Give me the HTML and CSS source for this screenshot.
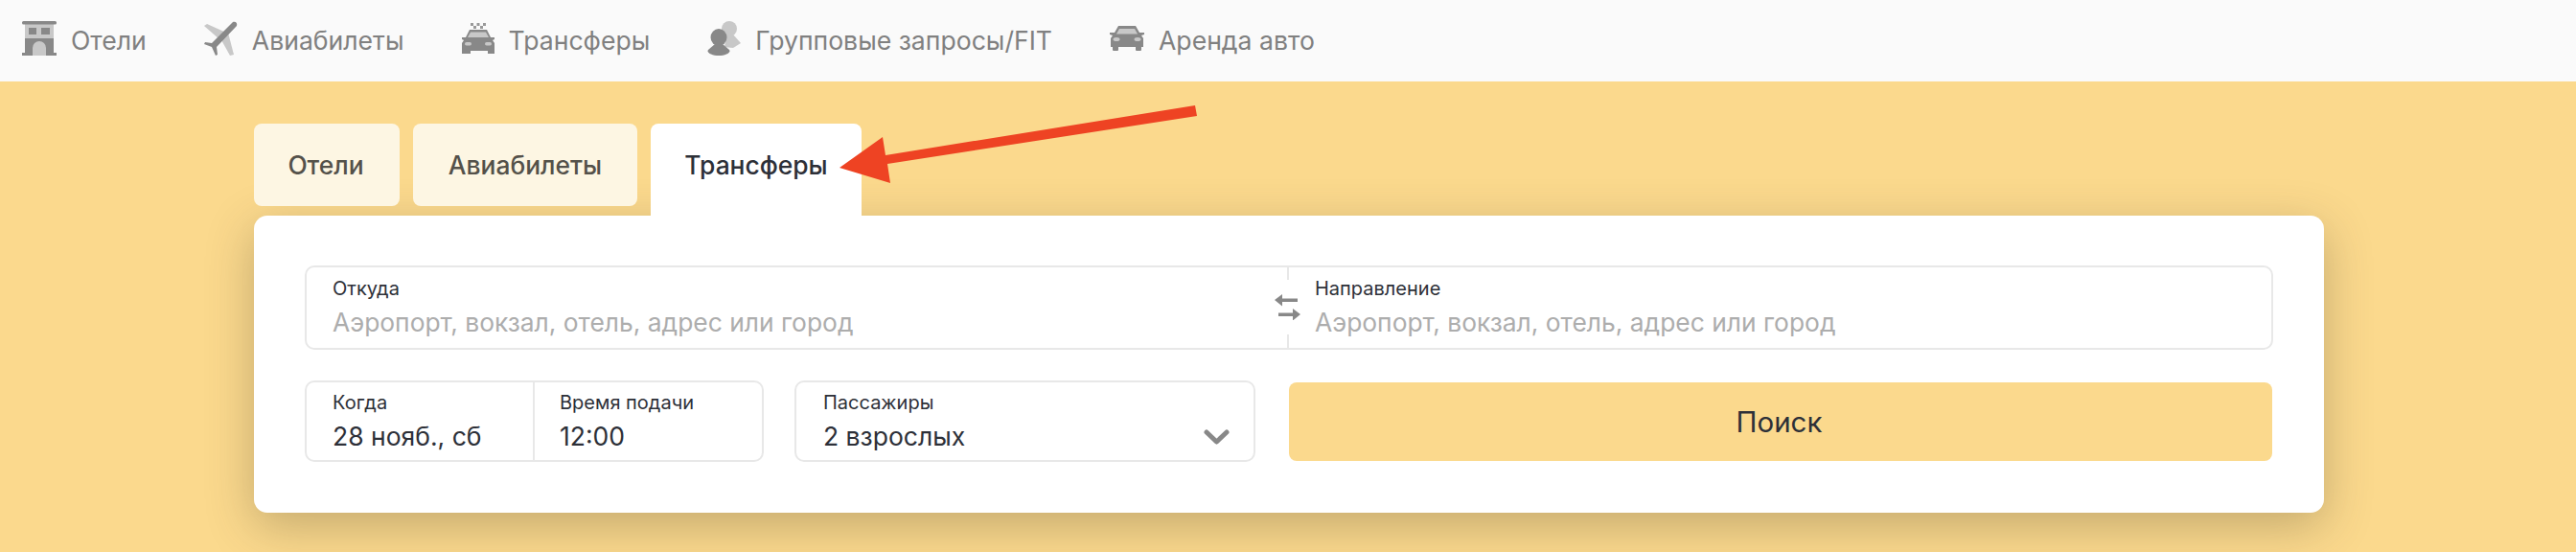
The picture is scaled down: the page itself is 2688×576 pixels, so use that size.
FILE: index.html

```html
<!DOCTYPE html>
<html lang="ru">
<head>
  <meta charset="UTF-8" />
  <title>Трансферы</title>
  <link rel="stylesheet" href="styles.css">
</head>
<body>
  <nav class="topbar">
    <a class="nav-item">
      <svg class="nav-icon" viewBox="0 0 36 36" width="36" height="36">
        <rect x="3" y="3" width="30" height="16" fill="#c8c8c8"/>
        <rect x="0" y="0" width="36" height="3.500" rx="1.500" fill="#888"/>
        <rect x="7" y="7" width="8" height="7" fill="#888"/>
        <rect x="20" y="7" width="9" height="7" fill="#888"/>
        <path d="M3 18h30v15h3v3H0v-3h3z" fill="#888"/>
        <path d="M11 36V28a7 7 0 0 1 14 0v8z" fill="#c8c8c8"/>
      </svg>
      <span>Отели</span>
    </a>
    <a class="nav-item">
      <svg class="nav-icon" viewBox="0 0 35 36" width="35" height="36">
        <path d="M0 5l3-2 20 9-7 7z" fill="#c8c8c8"/>
        <path d="M17 18l8-6 6 23-4 1z" fill="#c8c8c8"/>
        <path d="M30 1c3-1 5 1 4 4L13 27l1 8-2 1-4-9-8-3 1-2 7 1z" fill="#888"/>
      </svg>
      <span>Авиабилеты</span>
    </a>
    <a class="nav-item">
      <svg class="nav-icon" viewBox="0 0 34 32" width="34" height="32">
        <path d="M9 0h3v3H9zM15.500 0h3v3h-3zM22 0h3v3h-3zM12 3h3v3h-3zM19 3h3v3h-3z" fill="#999"/>
        <path d="M8 7h18l4 8h4v2l-2 1 2 3v11h-7v-3H9v3H0V21l2-3-2-1v-2h4z" fill="#888"/>
        <path d="M9 9.500h16l3 5.500H6z" fill="#c8c8c8"/>
        <rect x="3" y="20" width="7" height="3.500" rx="1.700" fill="#c8c8c8"/>
        <rect x="24" y="20" width="7" height="3.500" rx="1.700" fill="#c8c8c8"/>
      </svg>
      <span>Трансферы</span>
    </a>
    <a class="nav-item">
      <svg class="nav-icon" viewBox="0 0 35 36" width="35" height="36">
        <ellipse cx="23" cy="8" rx="8" ry="8" fill="#c8c8c8"/>
        <path d="M20 14h7l8 9-8 5-9-1z" fill="#c8c8c8"/>
        <ellipse cx="12" cy="17" rx="8.500" ry="9" fill="#888"/>
        <path d="M8 24h8l7 6c2 3-4 6-11 6S-1 33 1 30z" fill="#888"/>
      </svg>
      <span>Групповые запросы/FIT</span>
    </a>
    <a class="nav-item">
      <svg class="nav-icon" viewBox="0 0 36 26" width="36" height="26">
        <path d="M9 0h18l4 7h5v2l-3 1 2 3v9h-2v3a1 1 0 0 1-1 1h-4a1 1 0 0 1-1-1v-3H9v3a1 1 0 0 1-1 1H4a1 1 0 0 1-1-1v-3H1v-9l2-3-3-1V7h5z" fill="#888"/>
        <path d="M10 3h16l3 5.500H7z" fill="#c8c8c8"/>
        <ellipse cx="7" cy="14" rx="3.500" ry="2" fill="#c8c8c8"/>
        <ellipse cx="29" cy="14" rx="3.500" ry="2" fill="#c8c8c8"/>
      </svg>
      <span>Аренда авто</span>
    </a>
  </nav>

  <main class="page">
    <div class="tabs">
      <div class="tab tab-hotels">Отели</div>
      <div class="tab tab-avia">Авиабилеты</div>
      <div class="tab tab-active">Трансферы</div>
    </div>

    <div class="search-card">
      <div class="field-group route">
        <div class="field route-from">
          <div class="label">Откуда</div>
          <div class="placeholder">Аэропорт, вокзал, отель, адрес или город</div>
        </div>
        <div class="field route-to">
          <div class="label">Направление</div>
          <div class="placeholder">Аэропорт, вокзал, отель, адрес или город</div>
        </div>
        <div class="swap">
          <svg viewBox="0 0 27 27" width="27" height="27">
            <path d="M0 6l8-6v4.500h16v3.500H8v4.500z" fill="#888"/>
            <path d="M27 21l-8-6v4.500H4v3.500h15v4.500z" fill="#888"/>
          </svg>
        </div>
      </div>

      <div class="form-row">
        <div class="field-group datetime">
          <div class="field when">
            <div class="label">Когда</div>
            <div class="value">28 нояб., сб</div>
          </div>
          <div class="field time">
            <div class="label">Время подачи</div>
            <div class="value">12:00</div>
          </div>
        </div>
        <div class="field-group passengers">
          <div class="field">
            <div class="label">Пассажиры</div>
            <div class="value">2 взрослых</div>
          </div>
          <svg class="chevron" viewBox="0 0 27 16" width="27" height="16">
            <path d="M3 3l10.500 10L24 3" fill="none" stroke="#888" stroke-width="5" stroke-linecap="round" stroke-linejoin="round"/>
          </svg>
        </div>
        <button class="search-btn">Поиск</button>
      </div>
    </div>
  </main>

  <svg class="arrow" viewBox="0 0 2688 576" width="2688" height="576">
    <path d="M876 175L921 143L924 162L1247 110L1249 121L926 171L929 191Z" fill="#ee4323"/>
  </svg>
</body>
</html>
```

FILE: styles.css

```css
html, body {
  margin: 0;
  padding: 0;
  height: 100%;
  overflow: hidden;
  background-color: #fbd98d;
  font-family: Inter, "Liberation Sans", sans-serif;
}
.topbar {
  height: 85px;
  background-color: #fafafa;
  display: flex;
  align-items: center;
  gap: 60px;
  padding-left: 23px;
  padding-bottom: 6px;
  box-sizing: border-box;
}
.nav-item {
  display: flex;
  align-items: center;
  gap: 15px;
  color: #808080;
  font-size: 26.6px;
}
.nav-item span { padding-top: 4px; }
.page {
  padding: 44px 263px 0 265px;
}
.tabs {
  display: flex;
  gap: 14px;
  height: 86px;
}
.tab {
  display: flex;
  align-items: center;
  justify-content: center;
  background-color: #fdf6e3;
  border-radius: 8px;
  color: #54514a;
  font-size: 26.4px;
  font-weight: 500;
}
.tab-hotels { width: 152px; padding-right: 2px; box-sizing: border-box; }
.tab-avia { width: 234px; }
.tab-active {
  width: 220px;
  height: 96px;
  padding-bottom: 10px;
  box-sizing: border-box;
  background-color: white;
  color: #2d3038;
  border-radius: 8px 8px 0 0;
}
.search-card {
  margin-top: 10px;
  height: 310px;
  box-sizing: border-box;
  padding: 52px 53px 0 53px;
  background-color: white;
  border-radius: 14px;
  box-shadow: 0 14px 50px rgba(70, 60, 40, 0.3);
}
.field-group {
  border: 2px solid #e8e8e8;
  border-radius: 10px;
  box-sizing: border-box;
  display: flex;
  position: relative;
}
.route { height: 88px; }
.route .field { padding-top: 9px; }
.route-from { width: 1023px; }
.route-to {
  flex: 1;
  padding-left: 30px;
  border-left: 2px solid #e8e8e8;
}
.field {
  padding: 8px 0 0 27px;
  box-sizing: border-box;
}
.label {
  font-size: 20px;
  line-height: 26px;
  color: #2d3038;
}
.placeholder {
  font-size: 26.4px;
  line-height: 36px;
  margin-top: 4px;
  color: #adadad;
}
.value {
  font-size: 26.500px;
  line-height: 36px;
  margin-top: 4px;
  color: #2d3038;
  white-space: nowrap;
}
.swap {
  position: absolute;
  left: 1010px;
  top: 13px;
  height: 57px;
  display: flex;
  align-items: center;
  background-color: white;
}
.form-row {
  display: flex;
  margin-top: 32px;
  align-items: center;
}
.datetime {
  width: 479px;
  height: 85px;
}
.when { width: 236px; }
.time {
  flex: 1;
  border-left: 2px solid #e8e8e8;
  padding-left: 26px;
}
.passengers {
  width: 481px;
  height: 85px;
  margin-left: 32px;
  justify-content: space-between;
}
.passengers .field { padding-left: 28px; }
.chevron { margin: 49px 25px 0 0; }
.search-btn {
  width: 1026px;
  height: 82px;
  margin-left: 35px;
  background-color: #fbd98d;
  border: none;
  border-radius: 8px;
  color: #2d3038;
  font-family: inherit;
  font-size: 29.500px;
  padding: 0 3px 0 0;
}
.arrow {
  position: absolute;
  left: 0;
  top: 0;
  pointer-events: none;
}
```
